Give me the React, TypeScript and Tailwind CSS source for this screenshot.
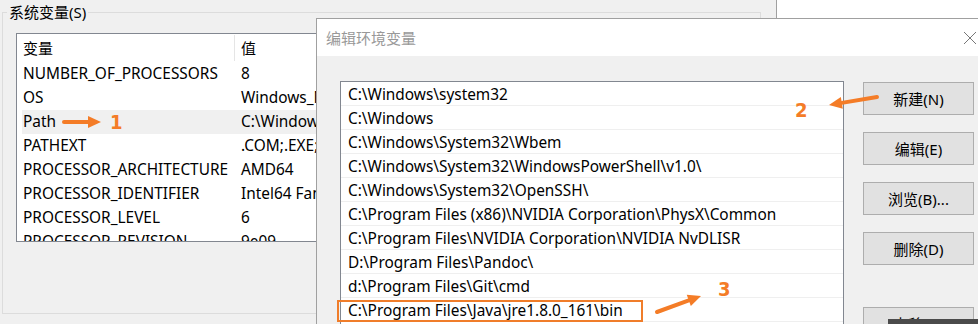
import React from "react";

const envRows: [string, string][] = [
  ["NUMBER_OF_PROCESSORS", "8"],
  ["OS", "Windows_NT"],
  ["Path", "C:\\Windows\\system32;C:\\Windows"],
  ["PATHEXT", ".COM;.EXE;.BAT;.CMD;.VBS"],
  ["PROCESSOR_ARCHITECTURE", "AMD64"],
  ["PROCESSOR_IDENTIFIER", "Intel64 Family 6 Model 158"],
  ["PROCESSOR_LEVEL", "6"],
  ["PROCESSOR_REVISION", "9e09"],
];

const paths = [
  "C:\\Windows\\system32",
  "C:\\Windows",
  "C:\\Windows\\System32\\Wbem",
  "C:\\Windows\\System32\\WindowsPowerShell\\v1.0\\",
  "C:\\Windows\\System32\\OpenSSH\\",
  "C:\\Program Files (x86)\\NVIDIA Corporation\\PhysX\\Common",
  "C:\\Program Files\\NVIDIA Corporation\\NVIDIA NvDLISR",
  "D:\\Program Files\\Pandoc\\",
  "d:\\Program Files\\Git\\cmd",
  "C:\\Program Files\\Java\\jre1.8.0_161\\bin",
];

const buttons = ["新建(N)", "编辑(E)", "浏览(B)...", "删除(D)"];

function Arrow({ x1, y1, x2, y2 }: { x1: number; y1: number; x2: number; y2: number }) {
  const dx = x2 - x1;
  const dy = y2 - y1;
  const len = Math.sqrt(dx * dx + dy * dy);
  const ux = dx / len;
  const uy = dy / len;
  const head = 13;
  const bx = x2 - ux * head;
  const by = y2 - uy * head;
  const px = -uy;
  const py = ux;
  const hw = 6;
  return (
    <g>
      <line x1={x1} y1={y1} x2={bx} y2={by} stroke="#f47c27" strokeWidth={4} strokeLinecap="round" />
      <polygon
        points={`${x2},${y2} ${bx + px * hw},${by + py * hw} ${bx - px * hw},${by - py * hw}`}
        fill="#f47c27"
      />
    </g>
  );
}

export default function App() {
  return (
    <div
      className="relative w-[978px] h-[324px] overflow-hidden bg-[#f0f0f0] text-black"
      style={{ fontFamily: '"Noto Sans", "Noto Sans CJK SC", sans-serif' }}
    >
      {/* background window: system variables group */}
      <div className="pt-[12px] pl-[2px]">
        <div className="relative w-[759px] h-[302px] border border-[#dcdcdc]">
          <div className="absolute left-[4px] top-[-11px] bg-[#f0f0f0] px-[2px] text-[15px] leading-[20px]">
            系统变量(S)
          </div>
          <div className="ml-[13px] mt-[20px] w-[730px] h-[209px] border border-[#828790] bg-white overflow-hidden">
            <div className="flex h-[28px] items-center text-[15px] leading-[20px]">
              <div className="w-[218px] pl-[6px] border-r border-[#e5e5e5] h-[26px] flex items-center">变量</div>
              <div className="pl-[6px]">值</div>
            </div>
            {envRows.map(([k, v], i) => (
              <div
                key={k}
                className={
                  i === 2
                    ? "flex h-[24px] items-center text-[15.4px] leading-[20px] ml-[5px] bg-[#f0f0f0]"
                    : "flex h-[24px] items-center text-[15.4px] leading-[20px] ml-[5px]"
                }
              >
                <div className="w-[218px] pl-[1px] whitespace-nowrap">{k}</div>
                <div className="pl-[1px] whitespace-nowrap">{v}</div>
              </div>
            ))}
          </div>
        </div>
      </div>

      {/* window behind, top-right */}
      <div className="absolute left-[776px] top-0 w-[210px] h-[18px] bg-white border-l border-[#a0a0a0]" />

      {/* Edit environment variable dialog */}
      <div className="absolute left-[316px] top-[18px] w-[700px] h-[400px] border border-[#a0a0a0] bg-[#f0f0f0] flex flex-col">
        <div className="h-[37px] bg-white flex items-center justify-between pl-[9px]">
          <span className="text-[15px] leading-[20px] text-[#999999]">编辑环境变量</span>
          <svg className="mr-[38px]" width="14" height="14" viewBox="0 0 14 14">
            <line x1="1" y1="1" x2="13" y2="13" stroke="#777" strokeWidth="1" />
            <line x1="13" y1="1" x2="1" y2="13" stroke="#777" strokeWidth="1" />
          </svg>
        </div>
        <div className="flex pl-[23px] pt-[25px] gap-[19px]">
          <div className="w-[504px] h-[260px] border border-[#828790] bg-white overflow-hidden">
            {paths.map((p) => (
              <div
                key={p}
                className="h-[24px] border-b border-[#efefef] flex items-center pl-[7px] pt-[2px] text-[15.4px] leading-[20px] whitespace-nowrap"
              >
                {p}
              </div>
            ))}
          </div>
          <div className="flex flex-col pt-[1px]">
            {buttons.map((b) => (
              <div
                key={b}
                className="w-[111px] h-[33px] mb-[17px] border border-[#adadad] bg-[#e1e1e1] flex items-center justify-center text-[15px] leading-[20px]"
              >
                {b}
              </div>
            ))}
            <div className="w-[111px] h-[33px] mt-[25px] border border-[#adadad] bg-[#e1e1e1] flex items-center justify-center text-[15px] leading-[20px]">
              上移(U)
            </div>
          </div>
        </div>
      </div>

      {/* dark tooltip strip at bottom right */}
      <div className="absolute left-[888px] top-[319px] w-[100px] h-[10px] bg-[#4b4b4b]" />

      {/* annotation: highlighted entry */}
      <div className="absolute left-[337px] top-[300px] w-[306px] h-[22px] border-2 border-[#f07d2a]" />

      {/* arrows */}
      <svg className="absolute left-0 top-0" width="978" height="324" viewBox="0 0 978 324">
        <Arrow x1={64} y1={122} x2={101} y2={122} />
        <Arrow x1={877} y1={97} x2={829} y2={105} />
        <Arrow x1={657} y1={312} x2={701} y2={296} />
      </svg>

      {/* annotation numbers */}
      <span
        className="absolute left-[110px] top-[110px] text-[20px] leading-[24px] text-[#f47c27]"
        style={{ fontFamily: '"DejaVu Sans Condensed", "DejaVu Sans", sans-serif', fontWeight: 600 }}
      >
        1
      </span>
      <span
        className="absolute left-[795px] top-[98px] text-[20px] leading-[24px] font-bold text-[#f47c27]"
        style={{ fontFamily: '"DejaVu Sans Condensed", "DejaVu Sans", sans-serif' }}
      >
        2
      </span>
      <span
        className="absolute left-[718px] top-[277px] text-[20px] leading-[24px] font-bold text-[#f47c27]"
        style={{ fontFamily: '"DejaVu Sans Condensed", "DejaVu Sans", sans-serif' }}
      >
        3
      </span>
    </div>
  );
}
